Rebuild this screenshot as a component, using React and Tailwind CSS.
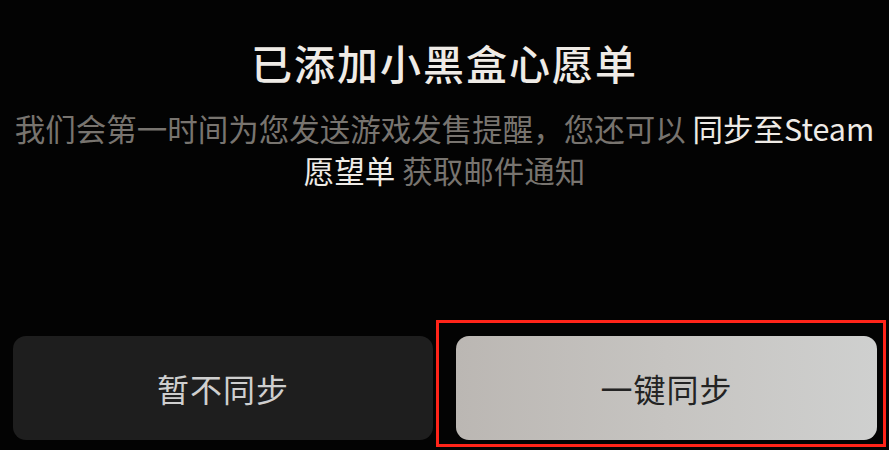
import React from 'react';

const CJK = { fontFamily: '"Noto Sans CJK SC", "Noto Sans", sans-serif' };

export default function App() {
  return (
    <div className="flex h-[450px] w-[889px] flex-col overflow-hidden bg-[#030303]" style={CJK}>
      <h1 className="mt-[37px] text-center text-[41px] font-medium leading-[50px] tracking-[2px] text-[#efebe6]">
        已添加小黑盒心愿单
      </h1>

      <p className="mt-[20px] text-center text-[30.5px] leading-[42px] text-[#78746f]">
        我们会第一时间为您发送游戏发售提醒，您还可以 <span className="text-[#efebe6]">同步至Steam</span>
        <br />
        <span className="text-[#efebe6]">愿望单</span> 获取邮件通知
      </p>

      <div className="mt-auto mb-[10px] flex gap-[23px] pl-[13px] pr-[12px]">
        <button className="flex h-[104px] w-[420px] items-center justify-center rounded-[13px] bg-[#1e1e1e] text-[32px] tracking-[1px] text-[#cfcfcf]">
          暂不同步
        </button>
        <div className="relative">
          <button className="flex h-[104px] w-[421px] items-center justify-center rounded-[13px] bg-gradient-to-r from-[#bbb7b3] via-[#c6c4c1] to-[#cfd0cf] text-[32px] tracking-[1px] text-[#232323]">
            一键同步
          </button>
          <span className="pointer-events-none absolute -top-[16px] -left-[20px] -right-[9px] -bottom-[7px] border-[3px] border-[#ff2419]" />
        </div>
      </div>
    </div>
  );
}
